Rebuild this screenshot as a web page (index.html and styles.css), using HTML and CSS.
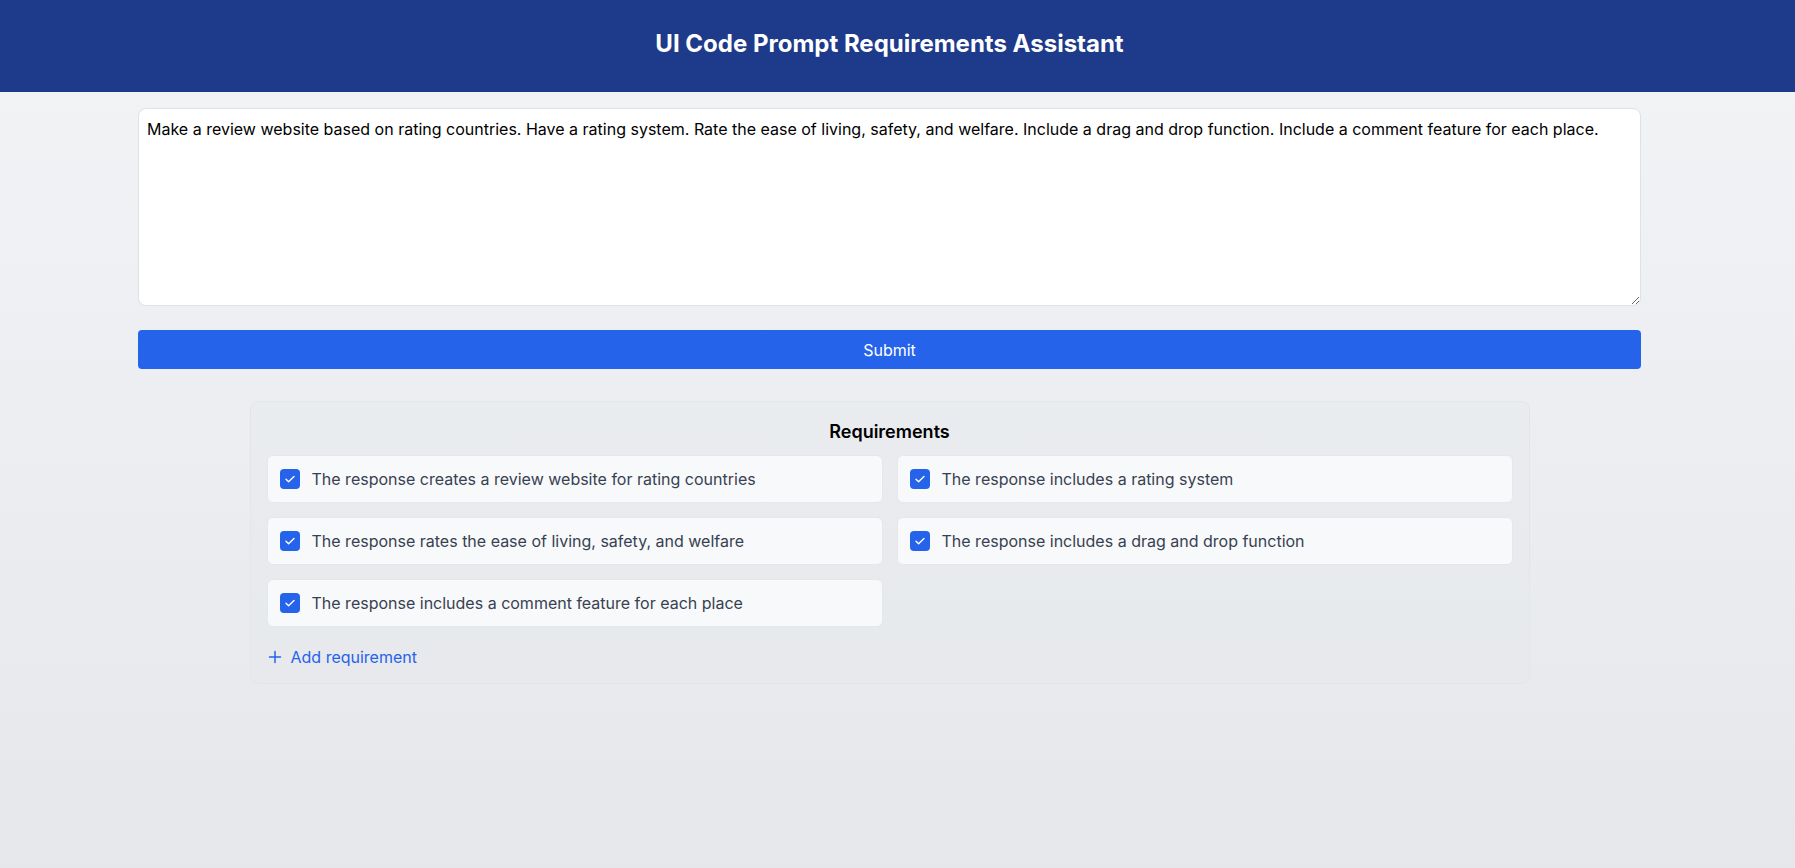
FILE: index.html
```html
<!DOCTYPE html>
<html lang="en">
<head>
<meta charset="utf-8">
<title>UI Code Prompt Requirements Assistant</title>
<link rel="stylesheet" href="styles.css">
</head>
<body>
<header class="app-header">
  <h1 class="app-title">UI Code Prompt Requirements Assistant</h1>
</header>
<main class="page">
  <div class="prompt-area">
    <textarea class="prompt-input">Make a review website based on rating countries. Have a rating system. Rate the ease of living, safety, and welfare. Include a drag and drop function. Include a comment feature for each place.</textarea>
    <button class="submit-btn" type="button">Submit</button>
  </div>
  <section class="req-card">
    <h2 class="req-title">Requirements</h2>
    <div class="req-grid">
      <label class="req-item"><span class="check"><svg viewBox="0 0 20 20" width="20" height="20"><path d="M6 10.2l2.6 2.6L14 7.4" fill="none" stroke="#fff" stroke-width="1.4" stroke-linecap="round" stroke-linejoin="round"/></svg></span><span class="req-text">The response creates a review website for rating countries</span></label>
      <label class="req-item"><span class="check"><svg viewBox="0 0 20 20" width="20" height="20"><path d="M6 10.2l2.6 2.6L14 7.4" fill="none" stroke="#fff" stroke-width="1.4" stroke-linecap="round" stroke-linejoin="round"/></svg></span><span class="req-text">The response includes a rating system</span></label>
      <label class="req-item"><span class="check"><svg viewBox="0 0 20 20" width="20" height="20"><path d="M6 10.2l2.6 2.6L14 7.4" fill="none" stroke="#fff" stroke-width="1.4" stroke-linecap="round" stroke-linejoin="round"/></svg></span><span class="req-text">The response rates the ease of living, safety, and welfare</span></label>
      <label class="req-item"><span class="check"><svg viewBox="0 0 20 20" width="20" height="20"><path d="M6 10.2l2.6 2.6L14 7.4" fill="none" stroke="#fff" stroke-width="1.4" stroke-linecap="round" stroke-linejoin="round"/></svg></span><span class="req-text">The response includes a drag and drop function</span></label>
      <label class="req-item"><span class="check"><svg viewBox="0 0 20 20" width="20" height="20"><path d="M6 10.2l2.6 2.6L14 7.4" fill="none" stroke="#fff" stroke-width="1.4" stroke-linecap="round" stroke-linejoin="round"/></svg></span><span class="req-text">The response includes a comment feature for each place</span></label>
    </div>
    <button class="add-btn" type="button"><svg viewBox="0 0 14 14" width="14" height="14"><path d="M7 1.5v11M1.5 7h11" fill="none" stroke="currentColor" stroke-width="1.5" stroke-linecap="round"/></svg><span>Add requirement</span></button>
  </section>
</main>
</body>
</html>
```

FILE: styles.css
```css
* { box-sizing: border-box; }

html, body {
  margin: 0;
  padding: 0;
}

body {
  font-family: Inter, "Noto Sans", "Liberation Sans", sans-serif;
  min-height: 100vh;
  background: linear-gradient(to bottom, #f3f4f6, #e5e7eb);
  color: #000;
}

.app-header {
  background: #1e3a8a;
  padding: 28px 16px 32px 0;
  text-align: center;
}

.app-title {
  margin: 0;
  font-size: 24px;
  line-height: 32px;
  font-weight: 700;
  color: #fff;
}

.page {
  padding: 16px 16px 40px 0;
}

.prompt-area {
  max-width: 1503px;
  margin: 0 auto;
}

.prompt-input {
  display: block;
  width: 100%;
  height: 198px;
  margin: 0;
  padding: 8px;
  border: 1px solid #dfe1e5;
  border-radius: 8px;
  background: #fff;
  font-family: Inter, "Noto Sans", "Liberation Sans", sans-serif;
  font-size: 16px;
  line-height: 24px;
  color: #000;
  resize: vertical;
  outline: none;
}

.submit-btn {
  display: block;
  width: 100%;
  margin-top: 24px;
  height: 39px;
  border: 0;
  border-radius: 4px;
  background: #2563eb;
  color: #fff;
  font-family: Inter, "Noto Sans", "Liberation Sans", sans-serif;
  font-size: 16px;
  line-height: 24px;
  font-weight: 400;
}

.req-card {
  width: 1280px;
  margin: 32px auto 0;
  padding: 16px 16px 16px;
  border: 1px solid #e3e5e9;
  border-radius: 8px;
  background: rgba(229, 231, 235, 0.35);
}

.req-title {
  margin: 0 0 9px;
  text-align: center;
  font-size: 18px;
  line-height: 28px;
  font-weight: 600;
  color: #000;
}

.req-grid {
  display: grid;
  grid-template-columns: 1fr 1fr;
  gap: 14px;
}

.req-item {
  display: flex;
  align-items: center;
  gap: 12px;
  height: 48px;
  padding: 0 12px;
  background: #f8f9fb;
  border: 1px solid #e5e7eb;
  border-radius: 6px;
}

.check {
  width: 20px;
  height: 20px;
  flex: none;
  border-radius: 4px;
  background: #2563eb;
  display: flex;
}

.req-text {
  font-size: 16px;
  line-height: 24px;
  color: #374151;
}

.add-btn {
  display: flex;
  align-items: center;
  gap: 9px;
  margin-top: 20px;
  padding: 0 0 0 1px;
  border: 0;
  background: none;
  color: #2563eb;
  font-family: Inter, "Noto Sans", "Liberation Sans", sans-serif;
  font-size: 16px;
  line-height: 20px;
}
```
